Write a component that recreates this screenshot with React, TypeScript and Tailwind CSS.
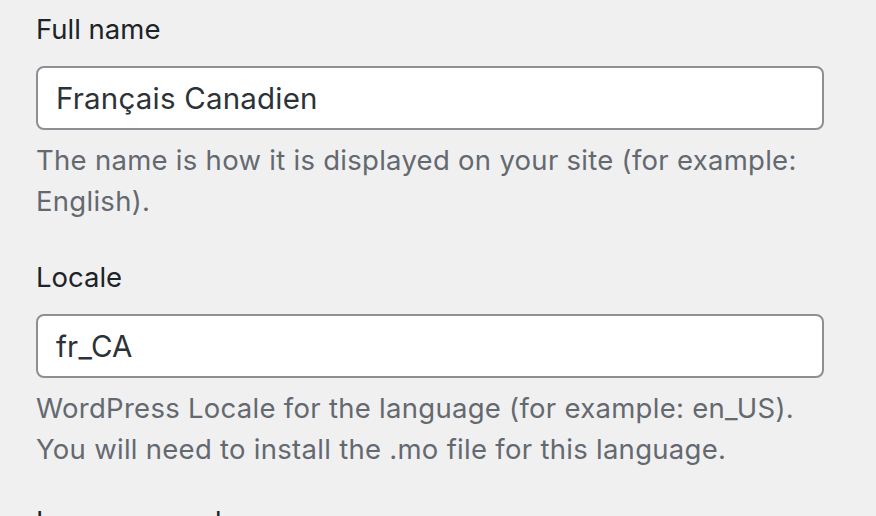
import React from "react";

interface FieldProps {
  label: string;
  value: string;
  description: string[];
  className?: string;
}

function Field({ label, value, description, className }: FieldProps) {
  return (
    <div className={"flex flex-col " + (className ?? "")}>
      <label className="text-[27.5px] leading-[41px] text-[#1d2327]">{label}</label>
      <input
        readOnly
        value={value}
        className="mt-[16px] h-[64px] w-[788px] rounded-[8px] border-2 border-[#8c8f94] bg-white px-[18px] text-[29.5px] tracking-[0.2px] text-[#2c3338] outline-none"
      />
      <p className="mt-[10px] text-[27.5px] leading-[41px] tracking-[0.28px] text-[#646970]">
        {description.map((line, i) => (
          <span key={i} className="block">
            {line}
          </span>
        ))}
      </p>
    </div>
  );
}

export default function App() {
  return (
    <div
      className="h-[516px] w-[876px] overflow-hidden bg-[#f0f0f1] pl-[36px] pt-[9px]"
      style={{ fontFamily: "Inter, 'Noto Sans', sans-serif" }}
    >
      <div className="flex flex-col">
        <Field
          label="Full name"
          value="Français Canadien"
          description={["The name is how it is displayed on your site (for example:", "English)."]}
        />
        <Field
          className="mt-[35px]"
          label="Locale"
          value="fr_CA"
          description={[
            "WordPress Locale for the language (for example: en_US).",
            "You will need to install the .mo file for this language.",
          ]}
        />
        <Field className="mt-[31px]" label="Language code" value="" description={[]} />
      </div>
    </div>
  );
}
